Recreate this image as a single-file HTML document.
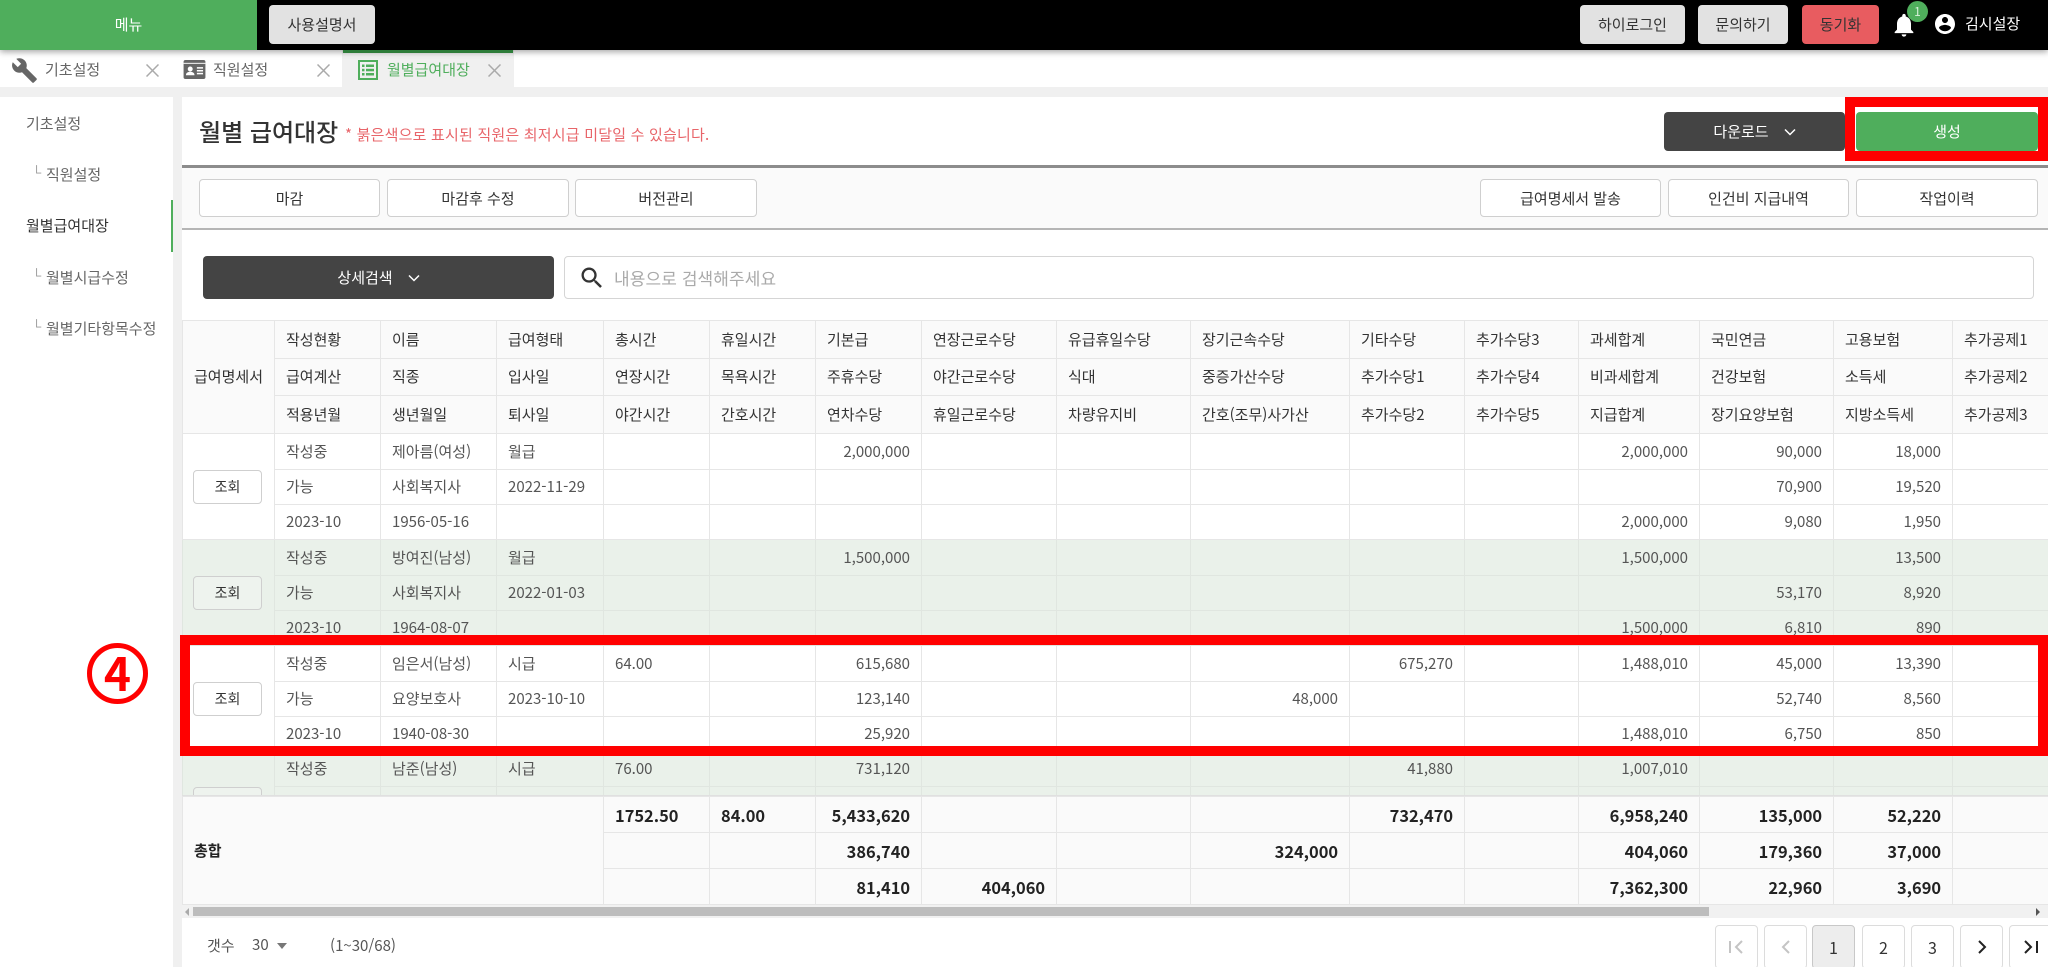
<!DOCTYPE html>
<html lang="ko">
<head>
<meta charset="utf-8">
<title>월별 급여대장</title>
<style>
*{box-sizing:border-box}
html,body{margin:0;padding:0;width:2048px;height:967px;overflow:hidden;background:#fff}
body{font-family:"Noto Sans CJK KR","Liberation Sans",sans-serif;font-size:15px;color:#333;position:relative}
.a{position:absolute}
.c{position:absolute;display:flex;align-items:center;justify-content:center;border-radius:4px}
.gr{background:#e2e2e2;color:#333}
.out{background:#fff;border:1px solid #cfcfcf;color:#333}
.dk{background:#444;color:#fff}
.t{position:absolute;white-space:nowrap;line-height:20px}
.l{font-family:"Liberation Sans",sans-serif;color:#999;font-size:13px}
table{border-collapse:collapse;table-layout:fixed;width:1920px;position:absolute;left:0}
td{border:1px solid #e6e6e6;padding:0 11px;font-size:15px;line-height:18px;white-space:nowrap;overflow:hidden;color:#555}
thead td{background:#fafafa;color:#333}
.g td{background:#eaf1ea;border-color:#e0e6e0}
tr.x td:nth-child(n+7),tr.y td:nth-child(n+6){text-align:right}
.btn{display:block;width:69px;height:34px;line-height:32px;text-align:center;border:1px solid #cfcfcf;border-radius:4px;background:#fff;color:#333;font-size:14px;margin-left:-1px}
.g .btn{background:#eef3ee}
#ft td{background:#fafafa;font-weight:700;color:#222;font-size:16.4px;line-height:20px}
#ft .f1 td:nth-child(n+4),#ft .f2 td:nth-child(n+3){text-align:right}
#ft td.tt{font-size:15px}
.pg{position:absolute;top:925px;height:44px;width:43px;border:1px solid #dcdcdc;border-radius:4px;background:#fff;display:flex;align-items:center;justify-content:center;color:#333;font-size:16px}
</style>
</head>
<body>
<!-- top bar -->
<div class="a" style="left:0;top:0;width:2048px;height:50px;background:#000;box-shadow:0 2px 6px rgba(0,0,0,.35);z-index:5"></div>
<div class="a" style="left:0;top:0;width:257px;height:50px;background:#4fae5c;z-index:6"></div>
<div class="t" style="left:0;top:15px;width:257px;text-align:center;color:#fff;z-index:7">메뉴</div>
<div class="c gr" style="left:269px;top:5px;width:106px;height:39px;z-index:7">사용설명서</div>
<div class="c gr" style="left:1580px;top:5px;width:105px;height:39px;z-index:7">하이로그인</div>
<div class="c gr" style="left:1698px;top:5px;width:90px;height:39px;z-index:7">문의하기</div>
<div class="c" style="left:1802px;top:5px;width:77px;height:39px;background:#e85c60;color:#333;z-index:7">동기화</div>
<svg class="a" style="left:1890px;top:11px;z-index:7" width="28" height="28" viewBox="0 0 24 24"><path fill="#fff" d="M12 22c1.1 0 2-.9 2-2h-4c0 1.1.89 2 2 2zm6-6v-5c0-3.07-1.64-5.64-4.5-6.32V4c0-.83-.67-1.5-1.5-1.5s-1.5.67-1.5 1.5v.68C7.63 5.36 6 7.92 6 11v5l-2 2v1h16v-1l-2-2z"/></svg>
<div class="a" style="left:1907px;top:1px;width:21px;height:21px;border-radius:50%;background:#4fae5c;color:#d8f0da;font-size:12px;line-height:21px;text-align:center;z-index:8">1</div>
<svg class="a" style="left:1933px;top:12px;z-index:7" width="24" height="24" viewBox="0 0 24 24"><path fill="#fff" d="M12 2C6.48 2 2 6.48 2 12s4.48 10 10 10 10-4.48 10-10S17.52 2 12 2zm0 3c1.66 0 3 1.34 3 3s-1.34 3-3 3-3-1.34-3-3 1.34-3 3-3zm0 14.2c-2.5 0-4.71-1.28-6-3.22.03-1.99 4-3.08 6-3.08 1.99 0 5.97 1.09 6 3.08-1.29 1.94-3.5 3.22-6 3.22z"/></svg>
<div class="t" style="left:1965px;top:14px;color:#fff;z-index:7">김시설장</div>

<!-- tabs -->
<div class="a" style="left:0;top:87px;width:2048px;height:10px;background:#f0f0f0"></div>
<div class="a" style="left:342px;top:50px;width:172px;height:47px;background:#f0f0f0"></div>
<div class="a" style="left:343px;top:50px;width:170px;height:3px;background:#2e7d3a;z-index:6"></div>
<svg class="a" style="left:11px;top:57px" width="27" height="27" viewBox="0 0 24 24"><path fill="#666" d="M22.7 19l-9.1-9.1c.9-2.3.4-5-1.5-6.9-2-2-5-2.4-7.4-1.3L9 6 6 9 1.6 4.7C.4 7.1.9 10.1 2.9 12.1c1.9 1.9 4.6 2.4 6.9 1.5l9.1 9.1c.4.4 1 .4 1.4 0l2.3-2.3c.5-.4.5-1.1.1-1.4z"/></svg>
<div class="t" style="left:45px;top:60px;color:#666">기초설정</div>
<svg class="a" style="left:146px;top:64px" width="13" height="13" viewBox="0 0 13 13"><path d="M.5.5l12 12M12.500.5l-12 12" stroke="#aaa" stroke-width="1.500" fill="none"/></svg>
<svg class="a" style="left:183px;top:60px" width="23" height="19" viewBox="0 0 23 20"><rect x="0" y="0" width="23" height="20" rx="2" fill="#666"/><rect x="0" y="3" width="23" height="1" fill="#fff"/><circle cx="7" cy="9.5" r="2.6" fill="#fff"/><path fill="#fff" d="M2.5 16c0-2.5 2-3.6 4.500-3.600s4.500 1.100 4.500 3.600z"/><rect x="14" y="7.500" width="6.500" height="1.600" fill="#fff"/><rect x="14" y="10.500" width="6.500" height="1.600" fill="#fff"/><rect x="14" y="13.500" width="6.500" height="1.600" fill="#fff"/></svg>
<div class="t" style="left:213px;top:60px;color:#666">직원설정</div>
<svg class="a" style="left:317px;top:64px" width="13" height="13" viewBox="0 0 13 13"><path d="M.5.5l12 12M12.500.5l-12 12" stroke="#aaa" stroke-width="1.500" fill="none"/></svg>
<svg class="a" style="left:358px;top:60px" width="20" height="20" viewBox="0 0 20 20"><rect x="1" y="1" width="18" height="18" fill="none" stroke="#4fae5c" stroke-width="2"/><g fill="#4fae5c"><rect x="4" y="4.500" width="2.500" height="2.500"/><rect x="8" y="4.500" width="8" height="2.500"/><rect x="4" y="8.800" width="2.500" height="2.500"/><rect x="8" y="8.800" width="8" height="2.500"/><rect x="4" y="13" width="2.500" height="2.500"/><rect x="8" y="13" width="8" height="2.500"/></g></svg>
<div class="t" style="left:387px;top:60px;color:#4fae5c">월별급여대장</div>
<svg class="a" style="left:488px;top:64px" width="13" height="13" viewBox="0 0 13 13"><path d="M.5.5l12 12M12.500.5l-12 12" stroke="#aaa" stroke-width="1.500" fill="none"/></svg>

<!-- sidebar -->
<div class="a" style="left:173px;top:97px;width:9px;height:870px;background:#f0f0f0"></div>
<div class="t" style="left:26px;top:114px;color:#666">기초설정</div>
<div class="t l" style="left:32px;top:163px">└</div>
<div class="t" style="left:46px;top:165px;color:#666">직원설정</div>
<div class="t" style="left:26px;top:216px;color:#333">월별급여대장</div>
<div class="a" style="left:171px;top:200px;width:2px;height:52px;background:#4fae5c"></div>
<div class="t l" style="left:32px;top:266px">└</div>
<div class="t" style="left:46px;top:268px;color:#666">월별시급수정</div>
<div class="t l" style="left:32px;top:317px">└</div>
<div class="t" style="left:46px;top:319px;color:#666">월별기타항목수정</div>

<!-- title -->
<div class="t" style="left:199px;top:117px;font-size:24px;line-height:28px;color:#333;font-weight:500">월별 급여대장</div>
<div class="t" style="left:345px;top:125px;color:#e8656a;letter-spacing:.2px">* 붉은색으로 표시된 직원은 최저시급 미달일 수 있습니다.</div>
<div class="c dk" style="left:1664px;top:112px;width:181px;height:39px">다운로드<svg style="margin-left:15px" width="12" height="8" viewBox="0 0 12 8"><path d="M1 1.500l5 5 5-5" fill="none" stroke="#fff" stroke-width="1.500"/></svg></div>
<div class="c" style="left:1856px;top:112px;width:182px;height:39px;background:#4fae5c;color:#fff">생성</div>

<!-- toolbar -->
<div class="a" style="left:182px;top:165px;width:1866px;height:65px;background:#fafafa;border-top:3px solid #8c8c8c;border-bottom:2px solid #b5b5b5"></div>
<div class="c out" style="left:199px;top:179px;width:181px;height:38px">마감</div>
<div class="c out" style="left:387px;top:179px;width:182px;height:38px">마감후 수정</div>
<div class="c out" style="left:575px;top:179px;width:182px;height:38px">버전관리</div>
<div class="c out" style="left:1480px;top:179px;width:181px;height:38px">급여명세서 발송</div>
<div class="c out" style="left:1668px;top:179px;width:181px;height:38px">인건비 지급내역</div>
<div class="c out" style="left:1856px;top:179px;width:182px;height:38px">작업이력</div>

<!-- search -->
<div class="c dk" style="left:203px;top:256px;width:351px;height:43px">상세검색<svg style="margin-left:15px" width="12" height="8" viewBox="0 0 12 8"><path d="M1 1.500l5 5 5-5" fill="none" stroke="#fff" stroke-width="1.500"/></svg></div>
<div class="a" style="left:564px;top:256px;width:1470px;height:43px;border:1px solid #d5d5d5;border-radius:4px;background:#fff"></div>
<svg class="a" style="left:578px;top:264px" width="28" height="28" viewBox="0 0 24 24"><path fill="#333" d="M15.500 14h-.79l-.28-.27C15.410 12.590 16 11.110 16 9.500 16 5.910 13.090 3 9.500 3S3 5.910 3 9.500 5.910 16 9.500 16c1.610 0 3.090-.59 4.230-1.570l.27.28v.79l5 4.990L20.490 19l-4.990-5zm-6 0C7.010 14 5 11.990 5 9.500S7.010 5 9.500 5 14 7.010 14 9.500 11.990 14 9.500 14z"/></svg>
<div class="t" style="left:614px;top:268px;font-size:17px;color:#aaa;letter-spacing:.1px">내용으로 검색해주세요</div>

<!-- table -->
<div class="a" style="left:182px;top:320px;width:1866px;height:476px;overflow:hidden">
<table>
<colgroup><col style="width:92px"><col style="width:106px"><col style="width:116px"><col style="width:107px"><col style="width:106px"><col style="width:106px"><col style="width:106px"><col style="width:135px"><col style="width:134px"><col style="width:159px"><col style="width:115px"><col style="width:114px"><col style="width:121px"><col style="width:134px"><col style="width:119px"><col style="width:150px"></colgroup>
<thead>
<tr style="height:38px"><td rowspan="3">급여명세서</td><td>작성현황</td><td>이름</td><td>급여형태</td><td>총시간</td><td>휴일시간</td><td>기본급</td><td>연장근로수당</td><td>유급휴일수당</td><td>장기근속수당</td><td>기타수당</td><td>추가수당3</td><td>과세합계</td><td>국민연금</td><td>고용보험</td><td>추가공제1</td></tr>
<tr style="height:37px"><td>급여계산</td><td>직종</td><td>입사일</td><td>연장시간</td><td>목욕시간</td><td>주휴수당</td><td>야간근로수당</td><td>식대</td><td>중증가산수당</td><td>추가수당1</td><td>추가수당4</td><td>비과세합계</td><td>건강보험</td><td>소득세</td><td>추가공제2</td></tr>
<tr style="height:38px"><td>적용년월</td><td>생년월일</td><td>퇴사일</td><td>야간시간</td><td>간호시간</td><td>연차수당</td><td>휴일근로수당</td><td>차량유지비</td><td>간호(조무)사가산</td><td>추가수당2</td><td>추가수당5</td><td>지급합계</td><td>장기요양보험</td><td>지방소득세</td><td>추가공제3</td></tr>
</thead>
<tbody>
<tr class="x" style="height:36px"><td rowspan="3"><span class="btn">조회</span></td><td>작성중</td><td>제아름(여성)</td><td>월급</td><td></td><td></td><td>2,000,000</td><td></td><td></td><td></td><td></td><td></td><td>2,000,000</td><td>90,000</td><td>18,000</td><td></td></tr>
<tr class="y" style="height:35px"><td>가능</td><td>사회복지사</td><td>2022-11-29</td><td></td><td></td><td></td><td></td><td></td><td></td><td></td><td></td><td></td><td>70,900</td><td>19,520</td><td></td></tr>
<tr class="y" style="height:35px"><td>2023-10</td><td>1956-05-16</td><td></td><td></td><td></td><td></td><td></td><td></td><td></td><td></td><td></td><td>2,000,000</td><td>9,080</td><td>1,950</td><td></td></tr>

<tr class="x g" style="height:36px"><td rowspan="3"><span class="btn">조회</span></td><td>작성중</td><td>방여진(남성)</td><td>월급</td><td></td><td></td><td>1,500,000</td><td></td><td></td><td></td><td></td><td></td><td>1,500,000</td><td></td><td>13,500</td><td></td></tr>
<tr class="y g" style="height:35px"><td>가능</td><td>사회복지사</td><td>2022-01-03</td><td></td><td></td><td></td><td></td><td></td><td></td><td></td><td></td><td></td><td>53,170</td><td>8,920</td><td></td></tr>
<tr class="y g" style="height:35px"><td>2023-10</td><td>1964-08-07</td><td></td><td></td><td></td><td></td><td></td><td></td><td></td><td></td><td></td><td>1,500,000</td><td>6,810</td><td>890</td><td></td></tr>

<tr class="x" style="height:36px"><td rowspan="3"><span class="btn">조회</span></td><td>작성중</td><td>임은서(남성)</td><td>시급</td><td>64.00</td><td></td><td>615,680</td><td></td><td></td><td></td><td>675,270</td><td></td><td>1,488,010</td><td>45,000</td><td>13,390</td><td></td></tr>
<tr class="y" style="height:35px"><td>가능</td><td>요양보호사</td><td>2023-10-10</td><td></td><td></td><td>123,140</td><td></td><td></td><td>48,000</td><td></td><td></td><td></td><td>52,740</td><td>8,560</td><td></td></tr>
<tr class="y" style="height:35px"><td>2023-10</td><td>1940-08-30</td><td></td><td></td><td></td><td>25,920</td><td></td><td></td><td></td><td></td><td></td><td>1,488,010</td><td>6,750</td><td>850</td><td></td></tr>

<tr class="x g" style="height:35px"><td rowspan="3"><span class="btn">조회</span></td><td>작성중</td><td>남준(남성)</td><td>시급</td><td>76.00</td><td></td><td>731,120</td><td></td><td></td><td></td><td>41,880</td><td></td><td>1,007,010</td><td></td><td></td><td></td></tr>
<tr class="y g" style="height:35px"><td></td><td></td><td></td><td></td><td></td><td></td><td></td><td></td><td></td><td></td><td></td><td></td><td></td><td></td><td></td></tr>
<tr class="y g" style="height:35px"><td></td><td></td><td></td><td></td><td></td><td></td><td></td><td></td><td></td><td></td><td></td><td></td><td></td><td></td><td></td></tr>
</tbody>
</table>
</div>

<!-- totals -->
<div class="a" id="ft" style="left:182px;top:795px;width:1866px;height:110px;overflow:hidden;border-top:1px solid #e0e0e0">
<table>
<colgroup><col style="width:92px"><col style="width:106px"><col style="width:116px"><col style="width:107px"><col style="width:106px"><col style="width:106px"><col style="width:106px"><col style="width:135px"><col style="width:134px"><col style="width:159px"><col style="width:115px"><col style="width:114px"><col style="width:121px"><col style="width:134px"><col style="width:119px"><col style="width:150px"></colgroup>
<tr class="f1" style="height:36px"><td class="tt" colspan="4" rowspan="3">총합</td><td>1752.50</td><td>84.00</td><td>5,433,620</td><td></td><td></td><td></td><td>732,470</td><td></td><td>6,958,240</td><td>135,000</td><td>52,220</td><td></td></tr>
<tr class="f2" style="height:36px"><td></td><td></td><td>386,740</td><td></td><td></td><td>324,000</td><td></td><td></td><td>404,060</td><td>179,360</td><td>37,000</td><td></td></tr>
<tr class="f2" style="height:36px"><td></td><td></td><td>81,410</td><td>404,060</td><td></td><td></td><td></td><td></td><td>7,362,300</td><td>22,960</td><td>3,690</td><td></td></tr>
</table>
</div>

<!-- scrollbar -->
<div class="a" style="left:182px;top:905px;width:1866px;height:13px;background:#f1f1f1"></div>
<div class="a" style="left:193px;top:907px;width:1516px;height:9px;background:#bdbdbd"></div>
<div class="a" style="left:185px;top:908px;width:0;height:0;border:4px solid transparent;border-right:4px solid #aaa;border-left:0"></div>
<div class="a" style="left:2036px;top:908px;width:0;height:0;border:4px solid transparent;border-left:4px solid #555;border-right:0"></div>

<!-- footer -->
<div class="t" style="left:207px;top:936px;color:#555">갯수</div>
<div class="t" style="left:252px;top:935px;color:#555">30</div>
<div class="a" style="left:277px;top:943px;width:0;height:0;border-left:5.500px solid transparent;border-right:5.500px solid transparent;border-top:6px solid #777"></div>
<div class="t" style="left:330px;top:936px;color:#555">(1~30/68)</div>

<div class="pg" style="left:1715px;color:#bbb"><svg width="18" height="16" viewBox="0 0 18 16"><path d="M2 2v12M14 2L8 8l6 6" fill="none" stroke="#c4c4c4" stroke-width="2"/></svg></div>
<div class="pg" style="left:1764px"><svg width="12" height="16" viewBox="0 0 12 16"><path d="M9 2L3 8l6 6" fill="none" stroke="#c4c4c4" stroke-width="2"/></svg></div>
<div class="pg" style="left:1812px;background:#ededed;border-color:#c8c8c8">1</div>
<div class="pg" style="left:1862px">2</div>
<div class="pg" style="left:1911px">3</div>
<div class="pg" style="left:1960px"><svg width="12" height="16" viewBox="0 0 12 16"><path d="M3 2l6 6-6 6" fill="none" stroke="#222" stroke-width="2"/></svg></div>
<div class="pg" style="left:2009px"><svg width="18" height="16" viewBox="0 0 18 16"><path d="M3 2l6 6-6 6M15 2v12" fill="none" stroke="#222" stroke-width="2"/></svg></div>

<!-- annotations -->
<div class="a" style="left:180px;top:635px;width:1868px;height:121px;border:10px solid #f00;z-index:20"></div>
<div class="a" style="left:1845px;top:97px;width:203px;height:64px;border:10px solid #f00;z-index:20"></div>
<div class="a" style="left:87px;top:643px;width:61px;height:61px;border:5px solid #f00;border-radius:50%;color:#f00;font-weight:700;font-size:46px;line-height:49px;text-align:center;z-index:20">4</div>
</body>
</html>
